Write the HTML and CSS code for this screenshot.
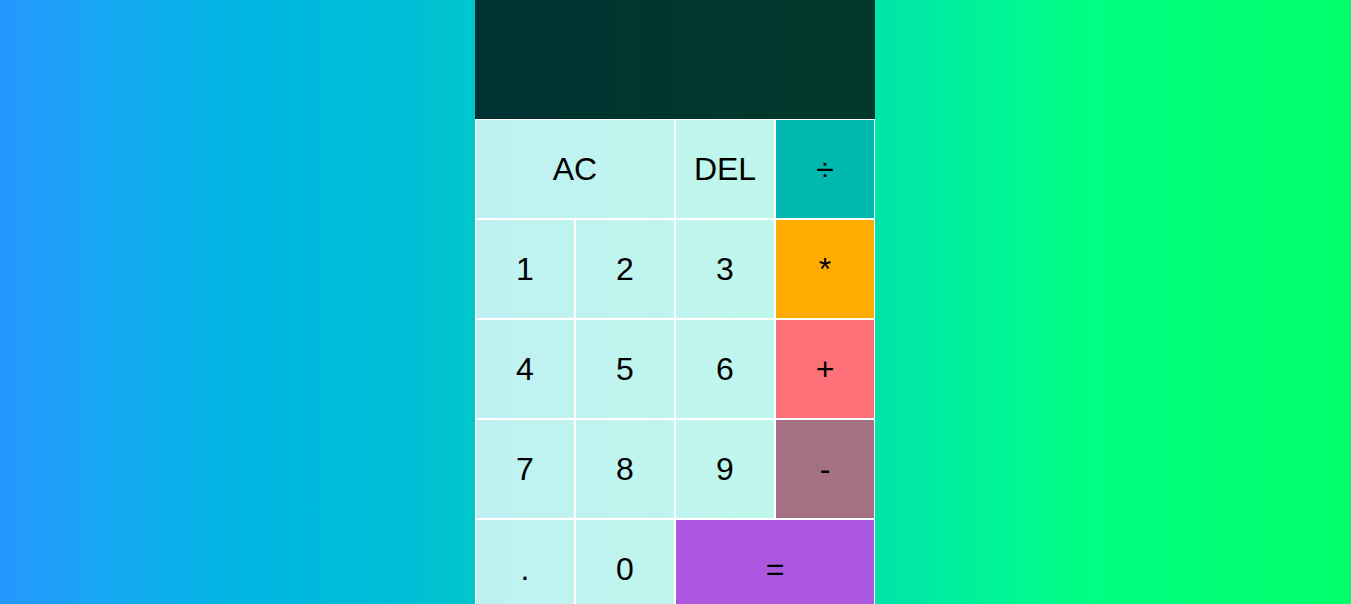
FILE: index.html
```html
<!DOCTYPE html>
<html lang="en">
<head>
<meta charset="utf-8">
<title>Calculator</title>
<link rel="stylesheet" href="styles.css">
</head>
<body>
<div class="calculator-grid">
  <div class="output">
    <div class="previous-operand"></div>
    <div class="current-operand"></div>
  </div>
  <button class="span-two">AC</button>
  <button>DEL</button>
  <button class="op-div">÷</button>
  <button>1</button>
  <button>2</button>
  <button>3</button>
  <button class="op-mul">*</button>
  <button>4</button>
  <button>5</button>
  <button>6</button>
  <button class="op-add">+</button>
  <button>7</button>
  <button>8</button>
  <button>9</button>
  <button class="op-sub">-</button>
  <button>.</button>
  <button>0</button>
  <button class="span-two op-eq">=</button>
</div>
</body>
</html>
```
FILE: styles.css
```css
*, *::before, *::after {
  box-sizing: border-box;
  font-family: "Liberation Sans", Arial, sans-serif;
  font-weight: normal;
}

body {
  margin: 0;
  padding: 0;
  background: linear-gradient(to right,
    #2696ff 0%,
    #14aaf0 9%,
    #00b7e2 18.5%,
    #00bed6 30%,
    #00c6cc 35%,
    #00e4aa 65%,
    #00f596 74%,
    #00ff82 81%,
    #00ff6a 100%);
  min-height: 100vh;
}

.calculator-grid {
  display: grid;
  justify-content: center;
  padding-right: 1px;
  grid-template-columns: repeat(4, 100px);
  grid-template-rows: minmax(119px, auto) repeat(5, 100px);
}

.calculator-grid > button {
  cursor: pointer;
  font-size: 2rem;
  border: 1px solid white;
  outline: none;
  background-color: rgba(255, 255, 255, 0.75);
  color: #000;
  padding: 0;
}

.span-two {
  grid-column: span 2;
}

.calculator-grid > .op-div { background-color: #00b8ad; }
.calculator-grid > .op-mul { background-color: #ffab00; }
.calculator-grid > .op-add { background-color: #ff7179; }
.calculator-grid > .op-sub { background-color: #a47084; }
.calculator-grid > .op-eq  { background-color: #ab57df; }

.output {
  grid-column: 1 / -1;
  background-color: rgba(0, 0, 0, 0.75);
  display: flex;
  align-items: flex-end;
  justify-content: space-around;
  flex-direction: column;
  padding: 10px;
  word-wrap: break-word;
  word-break: break-all;
}

.previous-operand {
  color: rgba(255, 255, 255, 0.75);
  font-size: 1.5rem;
}

.current-operand {
  color: white;
  font-size: 2.5rem;
}
```
